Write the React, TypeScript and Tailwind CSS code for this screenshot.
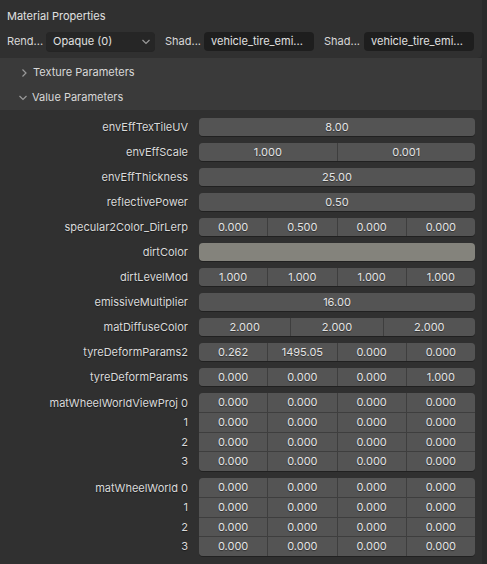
import React from "react";

type Row = { label: string; vals?: string[]; color?: string };

const rows: Row[] = [
  { label: "envEffTexTileUV", vals: ["8.00"] },
  { label: "envEffScale", vals: ["1.000", "0.001"] },
  { label: "envEffThickness", vals: ["25.00"] },
  { label: "reflectivePower", vals: ["0.50"] },
  { label: "specular2Color_DirLerp", vals: ["0.000", "0.500", "0.000", "0.000"] },
  { label: "dirtColor", color: "#84837c" },
  { label: "dirtLevelMod", vals: ["1.000", "1.000", "1.000", "1.000"] },
  { label: "emissiveMultiplier", vals: ["16.00"] },
  { label: "matDiffuseColor", vals: ["2.000", "2.000", "2.000"] },
  { label: "tyreDeformParams2", vals: ["0.262", "1495.05", "0.000", "0.000"] },
  { label: "tyreDeformParams", vals: ["0.000", "0.000", "0.000", "1.000"] },
];

const cols: Record<number, string> = {
  1: "grid-cols-1",
  2: "grid-cols-2",
  3: "grid-cols-3",
  4: "grid-cols-4",
};

const shadow = "[text-shadow:0_1px_1px_rgba(0,0,0,0.45)]";

function Chevron({ down }: { down?: boolean }) {
  return (
    <svg width="10" height="10" viewBox="0 0 10 10" className="text-[#9a9a9a]">
      {down ? (
        <polyline points="1.5,3 5,6.5 8.5,3" fill="none" stroke="currentColor" strokeWidth="1.2" />
      ) : (
        <polyline points="3.5,1.5 7,5 3.5,8.5" fill="none" stroke="currentColor" strokeWidth="1.2" />
      )}
    </svg>
  );
}

function Field({ row }: { row: Row }) {
  if (row.color) {
    return (
      <div
        className="h-[18px] w-[276px] rounded-[4px] shadow-[0_1px_0_rgba(0,0,0,0.3)]"
        style={{ background: row.color }}
      />
    );
  }
  const vals = row.vals ?? [];
  return (
    <div
      className={`grid ${cols[vals.length]} h-[18px] w-[276px] gap-px overflow-hidden rounded-[4px] bg-[#3e3e3e] shadow-[0_1px_0_rgba(0,0,0,0.3)]`}
    >
      {vals.map((v, i) => (
        <div key={i} className={`flex items-center justify-center bg-[#545454] text-[#e4e4e4] ${shadow}`}>
          {v}
        </div>
      ))}
    </div>
  );
}

function Matrix({ name }: { name: string }) {
  return (
    <div className="flex">
      <div className="flex w-[188px] flex-col text-right text-[#dadada]">
        {["0", "1", "2", "3"].map((n, i) => (
          <div key={n} className={`flex h-[19.5px] items-center justify-end ${shadow}`}>
            {i === 0 ? `${name} ${n}` : n}
          </div>
        ))}
      </div>
      <div className="ml-[11px] grid h-[78px] w-[276px] grid-cols-4 gap-px overflow-hidden rounded-[4px] bg-[#3e3e3e] shadow-[0_1px_0_rgba(0,0,0,0.3)]">
        {Array.from({ length: 16 }).map((_, i) => (
          <div key={i} className={`flex items-center justify-center bg-[#545454] text-[#e4e4e4] ${shadow}`}>
            0.000
          </div>
        ))}
      </div>
    </div>
  );
}

export default function App() {
  return (
    <div className="flex h-[564px] w-[487px] bg-[#2a2a2a] font-['Inter','DejaVu_Sans',sans-serif] text-[11px]">
      <div className="flex w-[482px] flex-col">
        {/* top panel */}
        <div className="h-[58px] rounded-br-[5px] bg-[#303030] px-[7px]">
          <div className="flex h-[32px] items-center text-[#e0e0e0]">Material Properties</div>
          <div className="flex h-[19px] items-center text-[#d8d8d8]">
            <span className="w-[39px]">Rend...</span>
            <div className="flex h-[19px] w-[109px] items-center justify-between rounded-[4px] bg-[#262626] pl-[7px] pr-[4px] text-[#e0e0e0] shadow-[0_1px_0_rgba(0,0,0,0.25)]">
              <span>Opaque (0)</span>
              <Chevron down />
            </div>
            <span className="ml-[10px] w-[39px]">Shad...</span>
            <div className="flex h-[19px] w-[110px] items-center rounded-[4px] bg-[#1e1e1e] px-[7px] text-[#e0e0e0]">
              vehicle_tire_emi...
            </div>
            <span className="ml-[10px] w-[40px]">Shad...</span>
            <div className="flex h-[19px] w-[110px] items-center rounded-[4px] bg-[#1e1e1e] px-[7px] text-[#e0e0e0]">
              vehicle_tire_emi...
            </div>
          </div>
        </div>

        {/* sub panel headers */}
        <div className="h-[52px] bg-[#3a3a3a] pt-[2px] text-[#d8d8d8]">
          <div className="flex h-[25px] items-center gap-[4px] pl-[19px]">
            <Chevron />
            <span>Texture Parameters</span>
          </div>
          <div className="flex h-[25px] items-center gap-[4px] pl-[18px]">
            <Chevron down />
            <span>Value Parameters</span>
          </div>
        </div>

        {/* body */}
        <div className="flex flex-1 flex-col gap-[7px] bg-[#303030] pt-[8px]">
          {rows.map((r) => (
            <div key={r.label} className="flex h-[18px] items-center">
              <div className={`w-[188px] text-right text-[#dadada] ${shadow}`}>{r.label}</div>
              <div className="ml-[11px]">
                <Field row={r} />
              </div>
            </div>
          ))}
          <Matrix name="matWheelWorldViewProj" />
          <Matrix name="matWheelWorld" />
        </div>
      </div>
      <div className="w-[5px] bg-[#2a2a2a]" />
    </div>
  );
}
